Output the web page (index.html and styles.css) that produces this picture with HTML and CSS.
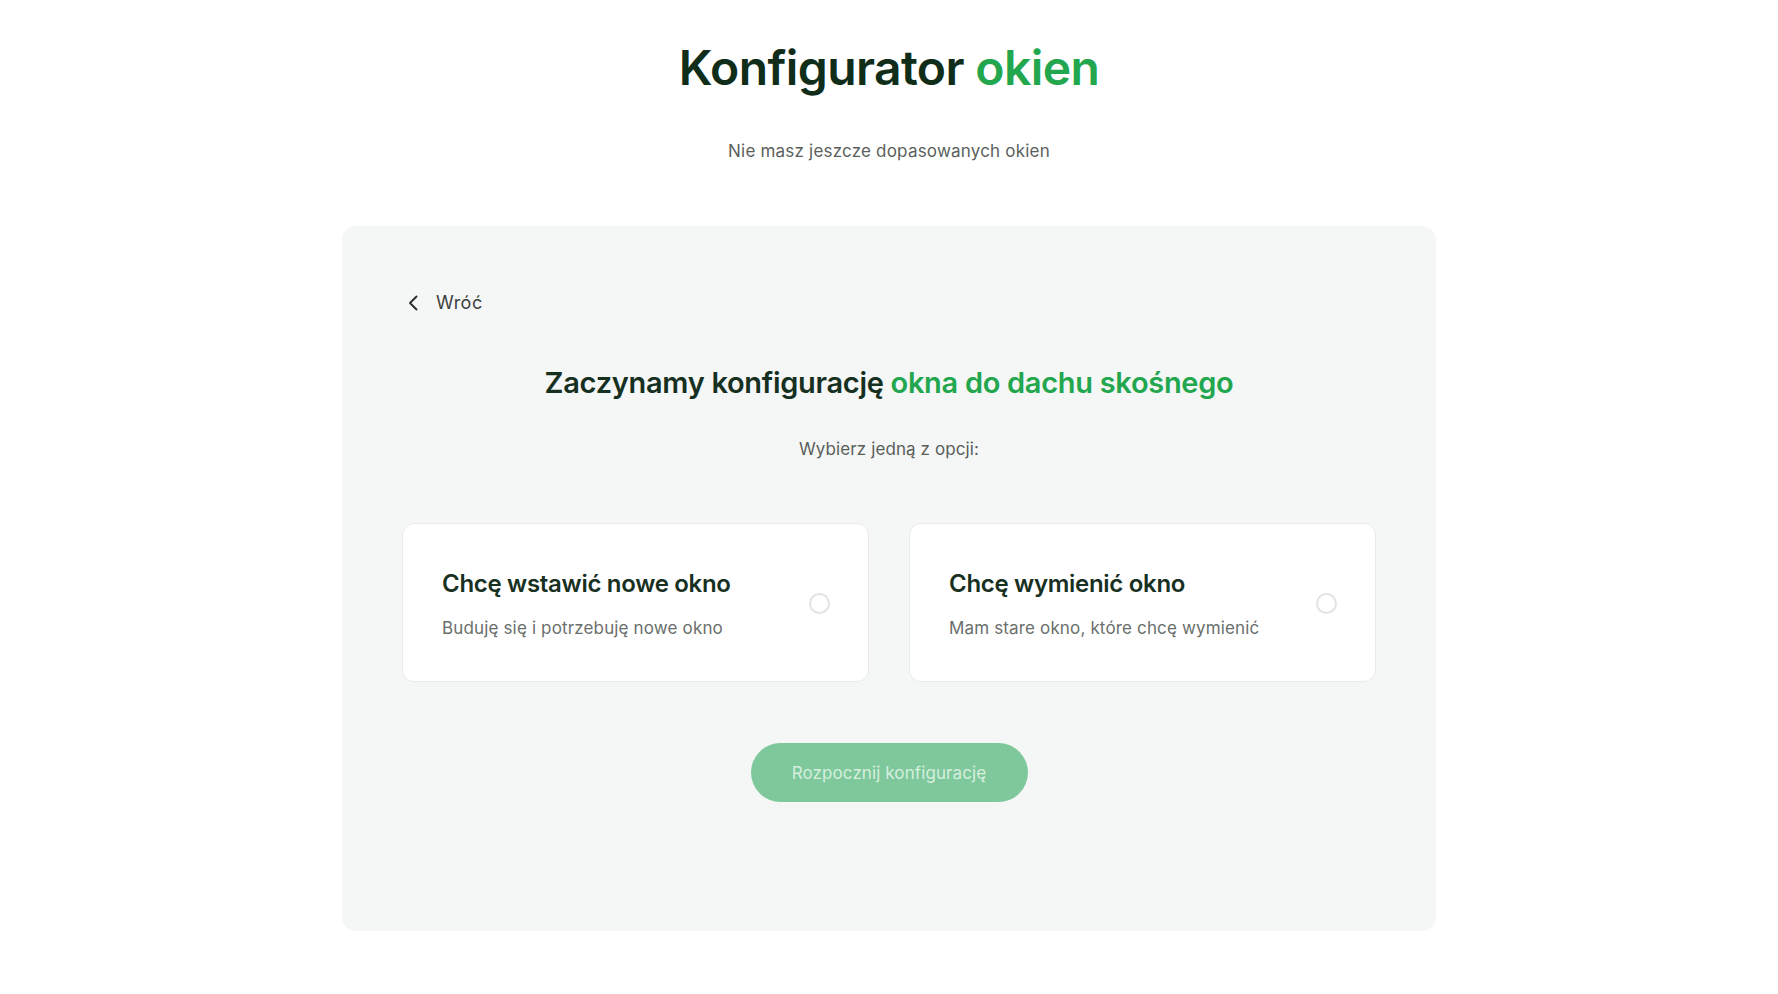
FILE: index.html
```
<!DOCTYPE html>
<html lang="pl">
<head>
<meta charset="utf-8">
<title>Konfigurator okien</title>
<link rel="stylesheet" href="styles.css">
</head>
<body>
<header class="hero">
  <h1 class="hero-title">Konfigurator <span class="accent">okien</span></h1>
  <p class="hero-sub">Nie masz jeszcze dopasowanych okien</p>
</header>
<main class="panel">
  <a class="back" href="#">
    <svg class="back-icon" width="16" height="20" viewBox="0 0 16 20" aria-hidden="true"><path d="M11.5 3.5 L5 10 L11.5 16.5" fill="none" stroke="#2b2f2c" stroke-width="1.9" stroke-linecap="round" stroke-linejoin="round"/></svg>
    <span>Wróć</span>
  </a>
  <h2 class="panel-title">Zaczynamy konfigurację <span class="accent">okna do dachu skośnego</span></h2>
  <p class="panel-sub">Wybierz jedną z opcji:</p>
  <div class="options">
    <label class="option">
      <span class="option-text">
        <span class="option-title">Chcę wstawić nowe okno</span>
        <span class="option-desc">Buduję się i potrzebuję nowe okno</span>
      </span>
      <span class="radio"></span>
    </label>
    <label class="option">
      <span class="option-text">
        <span class="option-title">Chcę wymienić okno</span>
        <span class="option-desc">Mam stare okno, które chcę wymienić</span>
      </span>
      <span class="radio"></span>
    </label>
  </div>
  <div class="actions">
    <button class="start" type="button">Rozpocznij konfigurację</button>
  </div>
</main>
</body>
</html>
```
FILE: styles.css
```
* { box-sizing: border-box; }
html, body { margin: 0; padding: 0; }
body {
  background: #ffffff;
  font-family: Inter, "Noto Sans", "Liberation Sans", sans-serif;
  color: #1d2a21;
  padding-bottom: 63px;
}
.accent { color: #22a64e; }
.hero {
  padding-top: 40px;
  text-align: center;
}
.hero-title {
  margin: 0;
  font-size: 48px;
  line-height: 56px;
  font-weight: 600;
  letter-spacing: -0.6px;
  color: #0f2d19;
}
.hero-sub {
  margin: 43px 0 0;
  font-size: 17px;
  line-height: 24px;
  letter-spacing: 0.2px;
  color: #5a5f5c;
}
.panel {
  width: 1094px;
  margin: 63px auto 0;
  background: #f5f6f6;
  border-radius: 14px;
  padding: 64px 60px 129px;
}
.back {
  display: flex;
  width: max-content;
  height: 26px;
  align-items: center;
  gap: 15px;
  margin-left: 3px;
  font-size: 18px;
  line-height: 24px;
  letter-spacing: 0.5px;
  color: #3c403d;
  text-decoration: none;
}
.back-icon { display: block; }
.panel-title {
  margin: 49px 0 0;
  text-align: center;
  font-size: 29px;
  line-height: 36px;
  font-weight: 600;
  letter-spacing: -0.3px;
  color: #16301f;
}
.panel-sub {
  margin: 36px 0 0;
  text-align: center;
  font-size: 17px;
  line-height: 24px;
  letter-spacing: 0.1px;
  color: #595e5b;
}
.options {
  margin-top: 62px;
  display: grid;
  grid-template-columns: 1fr 1fr;
  gap: 40px;
}
.option {
  height: 159px;
  background: #ffffff;
  border: 1px solid #e9ebea;
  border-radius: 12px;
  display: flex;
  align-items: center;
  justify-content: space-between;
  padding: 0 38px 0 39px;
  cursor: pointer;
}
.option-text {
  display: flex;
  flex-direction: column;
  gap: 17px;
  padding-top: 4px;
}
.option-title {
  font-size: 24px;
  line-height: 30px;
  font-weight: 600;
  letter-spacing: -0.3px;
  color: #18301f;
}
.option-desc {
  font-size: 17px;
  line-height: 24px;
  letter-spacing: 0.15px;
  color: #6a6f6c;
}
.radio {
  width: 21px;
  height: 21px;
  border: 2px solid #e2e4e3;
  border-radius: 50%;
  background: #fff;
  flex: none;
  margin-top: 1px;
}
.actions {
  margin-top: 61px;
  display: flex;
  justify-content: center;
}
.start {
  width: 277px;
  height: 59px;
  border: none;
  border-radius: 30px;
  background: #7ec89b;
  color: #d6efdf;
  font-family: inherit;
  font-size: 17px;
  letter-spacing: 0.1px;
}
```
